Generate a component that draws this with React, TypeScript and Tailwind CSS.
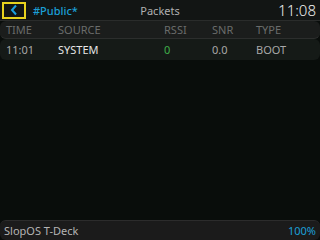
import React from "react";

export default function App() {
  const font = { fontFamily: '"Noto Sans", "DejaVu Sans", sans-serif' };
  return (
    <div className="w-[320px] h-[240px] bg-[#090d0b] flex flex-col overflow-hidden" style={font}>
      <div className="h-[21px] bg-[#121514] border-b border-[#2a2c2b] flex items-center relative">
        <div className="ml-[2px] w-[24px] h-[17px] border-2 border-[#e8d21e] flex items-center justify-center">
          <svg width="10" height="12" viewBox="0 0 10 12">
            <path d="M7 1.5 L3 6 L7 10.5" stroke="#1aa0e0" strokeWidth="2" fill="none" />
          </svg>
        </div>
        <span className="ml-[7px] text-[11px] text-[#1b9fd6] font-medium leading-none">#Public*</span>
        <span className="absolute left-0 right-0 text-center text-[11px] text-[#b0b0b0] leading-none pointer-events-none">Packets</span>
        <span className="ml-auto mr-[4px] text-[15px] text-[#f2f2f2] font-light leading-none">11:08</span>
      </div>
      <div className="h-[18px] bg-[#1b1d1c] rounded-[6px] border-b border-[#2c2e2d] flex items-center text-[11px] text-[#6a6c6b] leading-none">
        <span className="w-[58px] pl-[6px]">TIME</span>
        <span className="w-[106px]">SOURCE</span>
        <span className="w-[48px]">RSSI</span>
        <span className="w-[44px]">SNR</span>
        <span>TYPE</span>
      </div>
      <div className="h-[21px] bg-[#151a17] rounded-[6px] flex items-center text-[11px] leading-none">
        <span className="w-[58px] pl-[6px] text-[#a8a8a8]">11:01</span>
        <span className="w-[106px] text-[#e6e6e6]">SYSTEM</span>
        <span className="w-[48px] text-[#3fae4a]">0</span>
        <span className="w-[44px] text-[#a8a8a8]">0.0</span>
        <span className="text-[#a8a8a8]">BOOT</span>
      </div>
      <div className="flex-1" />
      <div className="h-[20px] bg-[#1b1b1b] border-t border-[#2c2c2c] rounded-[6px] flex items-center justify-between px-[4px] text-[11px] leading-none">
        <span className="text-[#b4b4b4]">SlopOS T-Deck</span>
        <span className="text-[#1b9fd6]">100%</span>
      </div>
    </div>
  );
}
